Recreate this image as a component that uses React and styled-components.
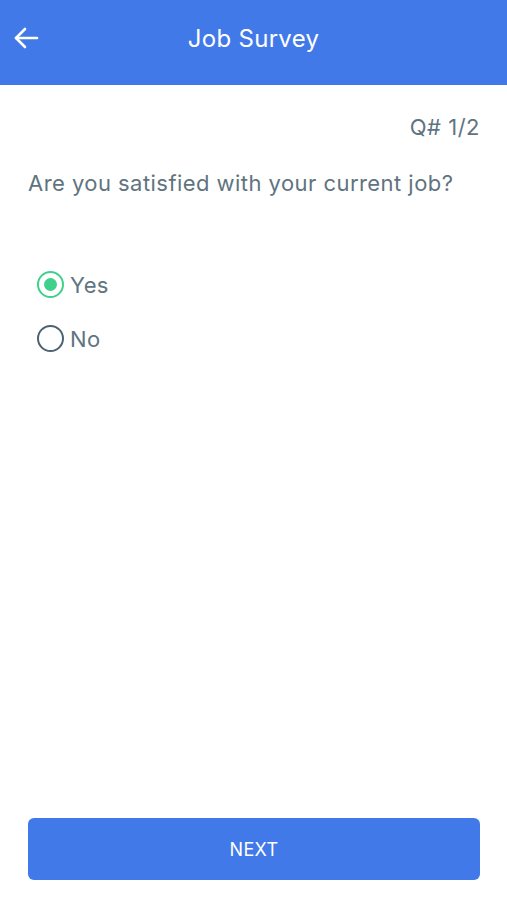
import React, { useState } from "react";
import styled, { createGlobalStyle } from "styled-components";

const Global = createGlobalStyle`
  html, body { margin: 0; padding: 0; background: #ffffff; }
  body { font-family: Inter, "Liberation Sans", Arial, sans-serif; }
  * { box-sizing: border-box; }
`;

const Page = styled.div`
  width: 507px;
  height: 900px;
  display: flex;
  flex-direction: column;
  background: #fff;
`;

const Header = styled.header`
  height: 85px;
  background: #4179e9;
  display: grid;
  grid-template-columns: 60px 1fr 60px;
  align-items: center;
  padding-bottom: 9px;
`;

const BackButton = styled.button`
  border: 0;
  background: transparent;
  padding: 0 0 0 13px;
  display: flex;
  align-items: center;
  color: #fff;
  cursor: pointer;
`;

const Title = styled.h1`
  margin: 0;
  text-align: center;
  color: #fff;
  font-size: 24px;
  letter-spacing: 0.3px;
  font-weight: 400;
`;

const Content = styled.main`
  flex: 1;
  display: flex;
  flex-direction: column;
  padding: 0 28px;
`;

const Counter = styled.div`
  text-align: right;
  color: #5f7480;
  font-size: 22px;
  letter-spacing: 0.5px;
  margin-top: 29px;
  margin-right: -1px;
`;

const Question = styled.p`
  margin: 30px 0 0;
  color: #5f7480;
  font-size: 22px;
  letter-spacing: 0.45px;
`;

const Options = styled.div`
  display: flex;
  flex-direction: column;
  gap: 27px;
  margin-top: 75px;
  padding-left: 9px;
`;

const Option = styled.label`
  display: flex;
  align-items: center;
  gap: 6px;
  color: #5f7480;
  font-size: 22px;
  letter-spacing: 0.4px;
  cursor: pointer;
`;

const Circle = styled.span`
  width: 27px;
  height: 27px;
  border-radius: 50%;
  border: 2.5px solid ${(p) => (p.$checked ? "#3fd08c" : "#4a6272")};
  display: flex;
  align-items: center;
  justify-content: center;
  &::after {
    content: "";
    width: 13px;
    height: 13px;
    border-radius: 50%;
    background: #3fd08c;
    display: ${(p) => (p.$checked ? "block" : "none")};
  }
`;

const Footer = styled.div`
  padding: 0 27px 20px 28px;
`;

const NextButton = styled.button`
  width: 100%;
  height: 62px;
  border: 0;
  border-radius: 6px;
  background: #4179e9;
  color: #fff;
  font-family: Inter, "Liberation Sans", Arial, sans-serif;
  font-size: 18px;
  letter-spacing: 0.3px;
  cursor: pointer;
`;

export default function App() {
  const [answer, setAnswer] = useState("Yes");
  return (
    <Page>
      <Global />
      <Header>
        <BackButton aria-label="Back">
          <svg width="26" height="24" viewBox="0 0 26 24" fill="none" stroke="#fff" strokeWidth="2.6" strokeLinecap="round" strokeLinejoin="round">
            <path d="M24 12H3" />
            <path d="M12 3L3 12L12 21" />
          </svg>
        </BackButton>
        <Title>Job Survey</Title>
        <span />
      </Header>
      <Content>
        <Counter>Q# 1/2</Counter>
        <Question>Are you satisfied with your current job?</Question>
        <Options>
          {["Yes", "No"].map((o) => (
            <Option key={o} onClick={() => setAnswer(o)}>
              <Circle $checked={answer === o} />
              {o}
            </Option>
          ))}
        </Options>
      </Content>
      <Footer>
        <NextButton>NEXT</NextButton>
      </Footer>
    </Page>
  );
}
